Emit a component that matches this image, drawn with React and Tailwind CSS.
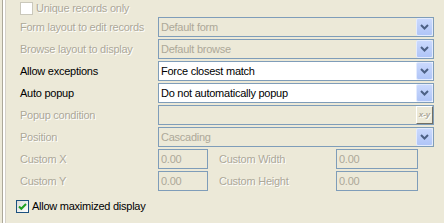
import React from "react";

const dis = "text-[#aca899] [text-shadow:1px_1px_0_#ffffff]";

function Arrow() {
  return (
    <svg width="9" height="6" viewBox="0 0 9 6">
      <polyline points="1,1 4.5,4.5 8,1" fill="none" stroke="#4d6185" strokeWidth="2" />
    </svg>
  );
}

function DropBtn() {
  return (
    <div className="w-[17px] h-[18px] border border-[#e3ebfe] bg-gradient-to-b from-[#cad9fd] to-[#b0c5f7] flex items-center justify-center rounded-[2px]">
      <Arrow />
    </div>
  );
}

function Combo({ text, enabled }) {
  return (
    <div
      className={`h-[20px] w-[276px] border border-[#7f9db9] flex items-center ${
        enabled ? "bg-white" : "bg-[#ece9d8]"
      }`}
    >
      <span className={`flex-1 pl-[2px] leading-none ${enabled ? "text-black" : "text-[#aca899]"}`}>{text}</span>
      <DropBtn />
    </div>
  );
}

function Label({ children, enabled, w = "w-[138px]" }) {
  return <div className={`${w} shrink-0 leading-none ${enabled ? "text-black" : dis}`}>{children}</div>;
}

function Edit({ text, w }) {
  return (
    <div className={`h-[20px] ${w} border border-[#7f9db9] flex items-center shrink-0`}>
      <span className="pl-[2px] text-[#aca899] leading-none">{text}</span>
    </div>
  );
}

export default function App() {
  return (
    <div className="w-[444px] h-[223px] bg-[#ece9d8] flex overflow-hidden font-['Liberation_Sans',Arial,sans-serif] text-[11px] tracking-[-0.25px]">
      <div className="w-[6px] h-full flex shrink-0">
        <div className="w-[2px] bg-[#ece9d8]" />
        <div className="w-[1px] bg-[#aca899]" />
        <div className="w-[2px] bg-white" />
        <div className="w-[1px] bg-[#d4d0c8]" />
      </div>
      <div className="flex flex-col pl-[14px] pt-[2px]">
        <div className="flex items-center h-[13px] gap-[3px]">
          <div className="w-[13px] h-[13px] border border-[#cac8bb] bg-white" />
          <span className={`leading-none ${dis}`}>Unique records only</span>
        </div>
        <div className="flex flex-col gap-[2px] mt-[2px]">
          <div className="flex items-center h-[20px]">
            <Label>Form layout to edit records</Label>
            <Combo text="Default form" />
          </div>
          <div className="flex items-center h-[20px]">
            <Label>Browse layout to display</Label>
            <Combo text="Default browse" />
          </div>
          <div className="flex items-center h-[20px]">
            <Label enabled>Allow exceptions</Label>
            <Combo text="Force closest match" enabled />
          </div>
          <div className="flex items-center h-[20px]">
            <Label enabled>Auto popup</Label>
            <Combo text="Do not automatically popup" enabled />
          </div>
          <div className="flex items-center h-[20px]">
            <Label>Popup condition</Label>
            <div className="h-[20px] w-[276px] border border-[#7f9db9] flex items-center justify-end">
              <div className="w-[17px] h-[18px] bg-[#ece9d8] border border-t-white border-l-white border-r-[#716f64] border-b-[#716f64] flex items-center justify-center">
                <span className="italic text-[8px] leading-none font-bold tracking-normal text-[#aca899] [text-shadow:1px_1px_0_#ffffff]">x-y</span>
              </div>
            </div>
          </div>
          <div className="flex items-center h-[20px]">
            <Label>Position</Label>
            <Combo text="Cascading" />
          </div>
          <div className="flex items-center h-[20px]">
            <Label>Custom X</Label>
            <Edit text="0.00" w="w-[50px]" />
            <div className="w-[11px]" />
            <Label w="w-[117px]">Custom Width</Label>
            <Edit text="0.00" w="w-[82px]" />
          </div>
          <div className="flex items-center h-[20px]">
            <Label>Custom Y</Label>
            <Edit text="0.00" w="w-[50px]" />
            <div className="w-[11px]" />
            <Label w="w-[117px]">Custom Height</Label>
            <Edit text="0.00" w="w-[82px]" />
          </div>
        </div>
        <div className="flex items-center h-[13px] gap-[3px] mt-[9px] -ml-[4px]">
          <div className="w-[13px] h-[13px] border border-[#1c5180] bg-gradient-to-br from-[#dcdcd7] to-white flex items-center justify-center">
            <svg width="9" height="9" viewBox="0 0 9 9">
              <polyline points="1,4.5 3.3,6.8 8,2" fill="none" stroke="#21a121" strokeWidth="2" />
            </svg>
          </div>
          <span className="leading-none text-black">Allow maximized display</span>
        </div>
      </div>
    </div>
  );
}
